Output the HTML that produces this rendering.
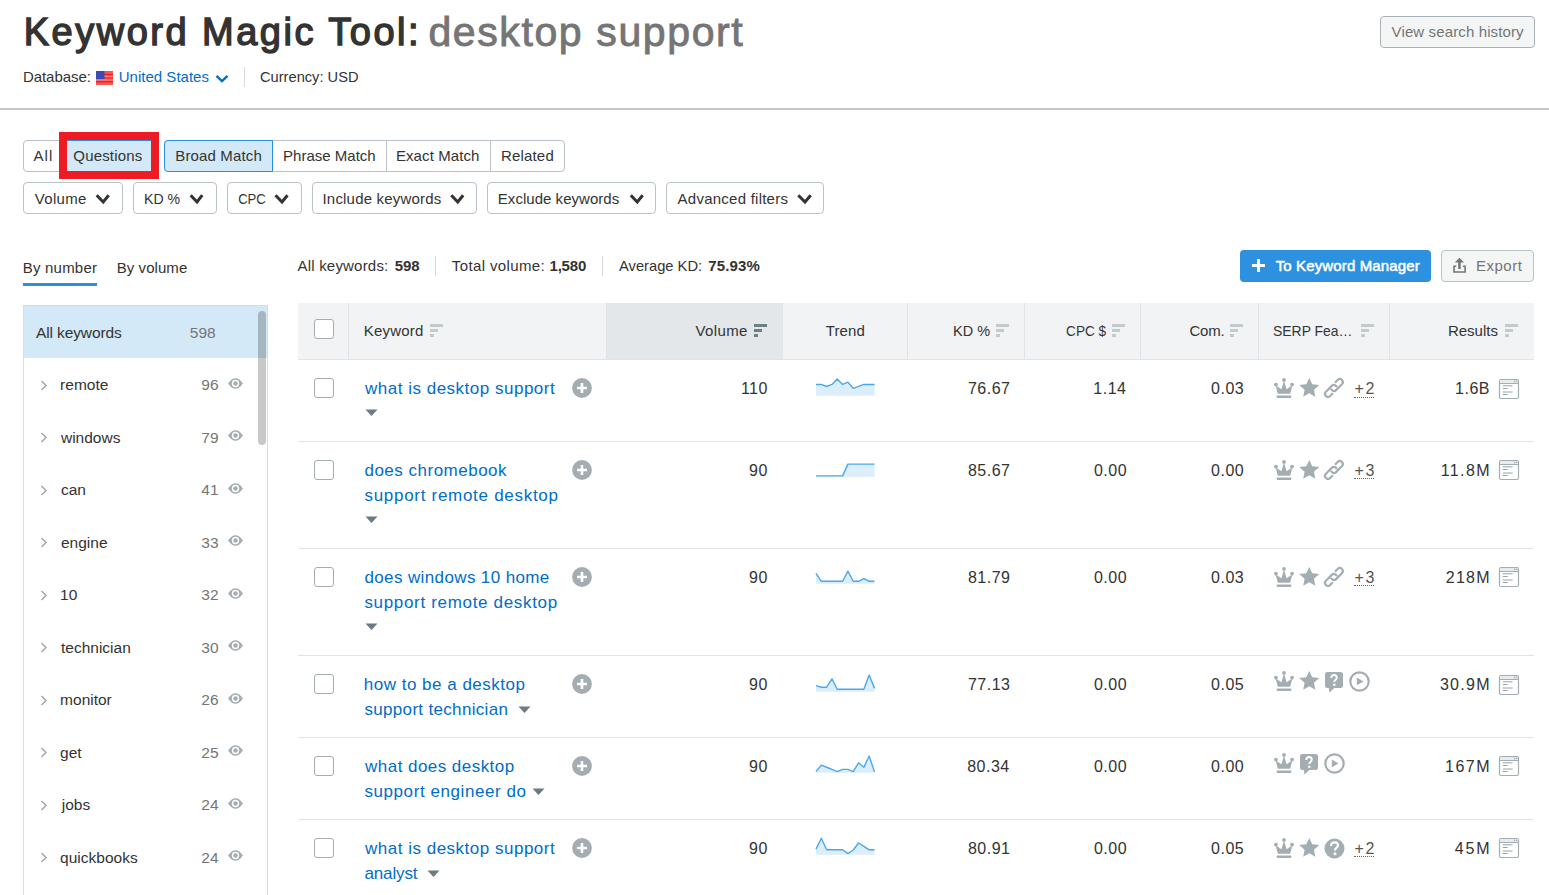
<!DOCTYPE html>
<html><head><meta charset="utf-8"><title>Keyword Magic Tool</title>
<style>
html,body{margin:0;padding:0;background:#fff;}
body{width:1549px;height:895px;overflow:hidden;position:relative;font-family:"Liberation Sans",sans-serif;}
.t{position:absolute;white-space:nowrap;line-height:0;}
svg{overflow:visible}
</style></head><body>
<div class="t" style="left:23.74px;top:32.3px;font-size:38px;color:#333333;font-weight:normal;letter-spacing:2.494px;-webkit-text-stroke:1.4px #333;">Keyword Magic Tool:</div>
<div class="t" style="left:428.40px;top:31.8px;font-size:41px;color:#757575;font-weight:normal;letter-spacing:1.614px;-webkit-text-stroke:0.9px #757575;">desktop support</div>
<div style="position:absolute;left:1380px;top:16px;width:155px;height:32px;box-sizing:border-box;border:1px solid #a8b3b7;border-radius:4px;background:#f4f6f6"></div>
<div class="t" style="left:1391.60px;top:32.0px;font-size:15px;color:#757575;font-weight:normal;letter-spacing:0.123px;">View search history</div>
<div class="t" style="left:22.90px;top:76.8px;font-size:15px;color:#333333;font-weight:normal;letter-spacing:-0.047px;">Database:</div>
<svg style="position:absolute;left:96px;top:71px" width="17" height="14" viewBox="0 0 17 14"><rect width="17" height="14" fill="#f25a5a"/><rect y="2.8" width="17" height="1.4" fill="#ff1a1a"/><rect y="4.7" width="17" height="1.3" fill="#ff7a7a"/><rect y="6.3" width="17" height="1.6" fill="#ff3333"/><rect y="8.3" width="17" height="1.4" fill="#ff7a7a"/><rect y="10" width="17" height="1.4" fill="#ff1a1a"/><rect width="8.5" height="8" fill="#3d4ab2"/></svg>
<div class="t" style="left:118.70px;top:76.8px;font-size:15px;color:#006dca;font-weight:normal;letter-spacing:0.020px;">United States</div>
<svg style="position:absolute;left:215px;top:74px" width="14" height="9" viewBox="0 0 14 9"><path d="M1.5 1.8 L7 7 L12.5 1.8" fill="none" stroke="#006dca" stroke-width="2.4"/></svg>
<div style="position:absolute;left:244px;top:67px;width:1px;height:20px;background:#d5dadd"></div>
<div class="t" style="left:260.22px;top:76.8px;font-size:15px;color:#333333;font-weight:normal;letter-spacing:0.000px;transform:scaleX(0.9761);transform-origin:1px 0;">Currency: USD</div>
<div style="position:absolute;left:0px;top:108px;width:1549px;height:2px;background:#c8c8c8"></div>
<div style="position:absolute;left:23px;top:140px;width:128px;height:32px;box-sizing:border-box;border:1px solid #b9c2c6;border-radius:4px;background:#fff"></div>
<div style="position:absolute;left:67px;top:140px;width:84px;height:31px;background:#d4e9f7;border-top:1px solid #2b8de0;box-sizing:border-box"></div>
<div class="t" style="left:33.50px;top:156.0px;font-size:15px;color:#333333;font-weight:normal;letter-spacing:1.100px;">All</div>
<div class="t" style="left:73.30px;top:156.0px;font-size:15px;color:#333333;font-weight:normal;letter-spacing:0.180px;">Questions</div>
<div style="position:absolute;left:59px;top:132px;width:100px;height:47px;box-sizing:border-box;border:8px solid #ed1c24"></div>
<div style="position:absolute;left:164px;top:140px;width:401px;height:32px;box-sizing:border-box;border:1px solid #b9c2c6;border-radius:4px;background:#fff"></div>
<div style="position:absolute;left:164px;top:140px;width:109px;height:32px;box-sizing:border-box;border:1px solid #2b8de0;border-radius:4px 0 0 4px;background:#d4e9f7"></div>
<div style="position:absolute;left:386px;top:140px;width:1px;height:32px;background:#b9c2c6"></div>
<div style="position:absolute;left:490px;top:140px;width:1px;height:32px;background:#b9c2c6"></div>
<div class="t" style="left:175.30px;top:156.0px;font-size:15px;color:#333333;font-weight:normal;letter-spacing:0.140px;">Broad Match</div>
<div class="t" style="left:283.00px;top:156.0px;font-size:15px;color:#333333;font-weight:normal;letter-spacing:0.015px;">Phrase Match</div>
<div class="t" style="left:395.92px;top:156.0px;font-size:15px;color:#333333;font-weight:normal;letter-spacing:0.100px;">Exact Match</div>
<div class="t" style="left:501.00px;top:156.0px;font-size:15px;color:#333333;font-weight:normal;letter-spacing:0.170px;">Related</div>
<div style="position:absolute;left:23px;top:182px;width:100px;height:32px;box-sizing:border-box;border:1px solid #b9c2c6;border-radius:4px;background:#fff"></div>
<div class="t" style="left:34.80px;top:199.0px;font-size:15px;color:#333333;font-weight:normal;letter-spacing:0.320px;">Volume</div>
<svg style="position:absolute;left:95px;top:192px" width="16" height="12" viewBox="0 0 16 12"><path d="M1.7000000000000057 3.2 L8.200000000000003 10.00000000000001 L13.7 3.2" fill="none" stroke="#333333" stroke-width="3"/></svg>
<div style="position:absolute;left:133px;top:182px;width:84px;height:32px;box-sizing:border-box;border:1px solid #b9c2c6;border-radius:4px;background:#fff"></div>
<div class="t" style="left:143.90px;top:199.0px;font-size:15px;color:#333333;font-weight:normal;letter-spacing:0.000px;transform:scaleX(0.9410);transform-origin:1px 0;">KD %</div>
<svg style="position:absolute;left:189px;top:192px" width="16" height="12" viewBox="0 0 16 12"><path d="M1.7000000000000057 3.2 L8.0 10.00000000000001 L13.299999999999994 3.2" fill="none" stroke="#333333" stroke-width="3"/></svg>
<div style="position:absolute;left:227px;top:182px;width:75px;height:32px;box-sizing:border-box;border:1px solid #b9c2c6;border-radius:4px;background:#fff"></div>
<div class="t" style="left:237.80px;top:199.0px;font-size:15px;color:#333333;font-weight:normal;letter-spacing:0.000px;transform:scaleX(0.8730);transform-origin:1px 0;">CPC</div>
<svg style="position:absolute;left:274px;top:192px" width="16" height="12" viewBox="0 0 16 12"><path d="M1.4999999999999887 3.2 L8.0 10.00000000000001 L13.50000000000001 3.2" fill="none" stroke="#333333" stroke-width="3"/></svg>
<div style="position:absolute;left:312px;top:182px;width:165px;height:32px;box-sizing:border-box;border:1px solid #b9c2c6;border-radius:4px;background:#fff"></div>
<div class="t" style="left:322.50px;top:199.0px;font-size:15px;color:#333333;font-weight:normal;letter-spacing:0.190px;">Include keywords</div>
<svg style="position:absolute;left:450px;top:192px" width="16" height="12" viewBox="0 0 16 12"><path d="M1.3 3.2 L7.75 10.00000000000001 L13.2 3.2" fill="none" stroke="#333333" stroke-width="3"/></svg>
<div style="position:absolute;left:487px;top:182px;width:169px;height:32px;box-sizing:border-box;border:1px solid #b9c2c6;border-radius:4px;background:#fff"></div>
<div class="t" style="left:497.80px;top:199.0px;font-size:15px;color:#333333;font-weight:normal;letter-spacing:0.037px;">Exclude keywords</div>
<svg style="position:absolute;left:629px;top:192px" width="16" height="12" viewBox="0 0 16 12"><path d="M1.8 3.2 L8.25 10.00000000000001 L13.7 3.2" fill="none" stroke="#333333" stroke-width="3"/></svg>
<div style="position:absolute;left:666px;top:182px;width:158px;height:32px;box-sizing:border-box;border:1px solid #b9c2c6;border-radius:4px;background:#fff"></div>
<div class="t" style="left:677.62px;top:199.0px;font-size:15px;color:#333333;font-weight:normal;letter-spacing:0.240px;">Advanced filters</div>
<svg style="position:absolute;left:797px;top:192px" width="17" height="12" viewBox="0 0 17 12"><path d="M1.3 3.2 L8.0 10.00000000000001 L13.7 3.2" fill="none" stroke="#333333" stroke-width="3"/></svg>
<div class="t" style="left:22.80px;top:267.9px;font-size:15px;color:#333333;font-weight:normal;letter-spacing:0.200px;">By number</div>
<div class="t" style="left:116.70px;top:267.9px;font-size:15px;color:#333333;font-weight:normal;letter-spacing:0.070px;">By volume</div>
<div style="position:absolute;left:23px;top:283px;width:74px;height:3px;background:#2b8de0"></div>
<div class="t" style="left:297.50px;top:265.9px;font-size:15px;color:#333333;font-weight:normal;letter-spacing:0.200px;">All keywords:</div>
<div class="t" style="left:394.80px;top:265.9px;font-size:15px;color:#333333;font-weight:bold;letter-spacing:-0.100px;">598</div>
<div style="position:absolute;left:435px;top:256px;width:1px;height:20px;background:#d5dadd"></div>
<div class="t" style="left:451.82px;top:265.9px;font-size:15px;color:#333333;font-weight:normal;letter-spacing:0.370px;">Total volume:</div>
<div class="t" style="left:549.50px;top:265.9px;font-size:15px;color:#333333;font-weight:bold;letter-spacing:-0.195px;">1,580</div>
<div style="position:absolute;left:602px;top:256px;width:1px;height:20px;background:#d5dadd"></div>
<div class="t" style="left:618.62px;top:265.9px;font-size:15px;color:#333333;font-weight:normal;letter-spacing:0.000px;transform:scaleX(0.9800);transform-origin:1px 0;">Average KD:</div>
<div class="t" style="left:708.26px;top:265.9px;font-size:15px;color:#333333;font-weight:bold;letter-spacing:0.120px;">75.93%</div>
<div style="position:absolute;left:1240px;top:250px;width:191px;height:32px;border-radius:4px;background:#2d91e0"></div>
<svg style="position:absolute;left:1252px;top:259px" width="13" height="13" viewBox="0 0 13 13"><path d="M6.5 0 V13 M0 6.5 H13" stroke="#fff" stroke-width="2.8"/></svg>
<div class="t" style="left:1275.70px;top:266.0px;font-size:15px;color:#fff;font-weight:normal;letter-spacing:0.135px;-webkit-text-stroke:0.5px #fff;">To Keyword Manager</div>
<div style="position:absolute;left:1441px;top:250px;width:93px;height:32px;box-sizing:border-box;border:1px solid #b9c2c6;border-radius:4px;background:#f4f6f6"></div>
<svg style="position:absolute;left:1452px;top:256px" width="16" height="18" viewBox="0 0 16 18"><path d="M7.45 1.8 L2.8 6.6 H6.2 V12.9 H8.7 V6.6 H12.1 Z" fill="#757575"/><path d="M4.2 10.3 H2.0 V16.0 H13.1 V10.3 H10.9" fill="none" stroke="#757575" stroke-width="1.6"/></svg>
<div class="t" style="left:1475.92px;top:266.0px;font-size:15px;color:#757575;font-weight:normal;letter-spacing:0.520px;">Export</div>
<div style="position:absolute;left:23px;top:305px;width:245px;height:600px;box-sizing:border-box;border:1px solid #d6dde0;background:#fff"></div>
<div style="position:absolute;left:24px;top:306px;width:243px;height:52px;background:#d4e9f7"></div>
<div style="position:absolute;left:258px;top:311px;width:8px;height:134px;border-radius:4px;background:rgba(0,0,0,0.215)"></div>
<div class="t" style="left:35.98px;top:332.9px;font-size:15.5px;color:#333333;font-weight:normal;letter-spacing:-0.109px;">All keywords</div>
<div class="t" style="left:189.80px;top:332.9px;font-size:15.5px;color:#757575;font-weight:normal;letter-spacing:0.000px;">598</div>
<svg style="position:absolute;left:40px;top:380px" width="8" height="11" viewBox="0 0 8 11"><path d="M1.5 1 L6 5.5 L1.5 10" fill="none" stroke="#9aa5a9" stroke-width="1.4"/></svg>
<div class="t" style="left:60.10px;top:385.0px;font-size:15.5px;color:#333333;font-weight:normal;letter-spacing:0.000px;">remote</div>
<div class="t" style="right:1330.40px;top:385.0px;font-size:15.5px;color:#757575;font-weight:normal;letter-spacing:0px;">96</div>
<svg style="position:absolute;left:228px;top:378px" width="15" height="11" viewBox="0 0 15 11"><path d="M0 5.5 Q7.5 -5 15 5.5 Q7.5 16 0 5.5 Z" fill="#a4aeb2"/><circle cx="7.5" cy="5.5" r="3.7" fill="#fff"/><circle cx="7.5" cy="5.5" r="2.2" fill="#a4aeb2"/></svg>
<svg style="position:absolute;left:40px;top:432px" width="8" height="11" viewBox="0 0 8 11"><path d="M1.5 1 L6 5.5 L1.5 10" fill="none" stroke="#9aa5a9" stroke-width="1.4"/></svg>
<div class="t" style="left:60.98px;top:437.5px;font-size:15.5px;color:#333333;font-weight:normal;letter-spacing:0.000px;">windows</div>
<div class="t" style="right:1330.40px;top:437.5px;font-size:15.5px;color:#757575;font-weight:normal;letter-spacing:0px;">79</div>
<svg style="position:absolute;left:228px;top:430px" width="15" height="11" viewBox="0 0 15 11"><path d="M0 5.5 Q7.5 -5 15 5.5 Q7.5 16 0 5.5 Z" fill="#a4aeb2"/><circle cx="7.5" cy="5.5" r="3.7" fill="#fff"/><circle cx="7.5" cy="5.5" r="2.2" fill="#a4aeb2"/></svg>
<svg style="position:absolute;left:40px;top:485px" width="8" height="11" viewBox="0 0 8 11"><path d="M1.5 1 L6 5.5 L1.5 10" fill="none" stroke="#9aa5a9" stroke-width="1.4"/></svg>
<div class="t" style="left:60.98px;top:490.0px;font-size:15.5px;color:#333333;font-weight:normal;letter-spacing:0.000px;">can</div>
<div class="t" style="right:1330.40px;top:490.0px;font-size:15.5px;color:#757575;font-weight:normal;letter-spacing:0px;">41</div>
<svg style="position:absolute;left:228px;top:483px" width="15" height="11" viewBox="0 0 15 11"><path d="M0 5.5 Q7.5 -5 15 5.5 Q7.5 16 0 5.5 Z" fill="#a4aeb2"/><circle cx="7.5" cy="5.5" r="3.7" fill="#fff"/><circle cx="7.5" cy="5.5" r="2.2" fill="#a4aeb2"/></svg>
<svg style="position:absolute;left:40px;top:537px" width="8" height="11" viewBox="0 0 8 11"><path d="M1.5 1 L6 5.5 L1.5 10" fill="none" stroke="#9aa5a9" stroke-width="1.4"/></svg>
<div class="t" style="left:60.98px;top:542.5px;font-size:15.5px;color:#333333;font-weight:normal;letter-spacing:0.000px;">engine</div>
<div class="t" style="right:1330.40px;top:542.5px;font-size:15.5px;color:#757575;font-weight:normal;letter-spacing:0px;">33</div>
<svg style="position:absolute;left:228px;top:535px" width="15" height="11" viewBox="0 0 15 11"><path d="M0 5.5 Q7.5 -5 15 5.5 Q7.5 16 0 5.5 Z" fill="#a4aeb2"/><circle cx="7.5" cy="5.5" r="3.7" fill="#fff"/><circle cx="7.5" cy="5.5" r="2.2" fill="#a4aeb2"/></svg>
<svg style="position:absolute;left:40px;top:590px" width="8" height="11" viewBox="0 0 8 11"><path d="M1.5 1 L6 5.5 L1.5 10" fill="none" stroke="#9aa5a9" stroke-width="1.4"/></svg>
<div class="t" style="left:60.10px;top:595.0px;font-size:15.5px;color:#333333;font-weight:normal;letter-spacing:0.000px;">10</div>
<div class="t" style="right:1330.40px;top:595.0px;font-size:15.5px;color:#757575;font-weight:normal;letter-spacing:0px;">32</div>
<svg style="position:absolute;left:228px;top:588px" width="15" height="11" viewBox="0 0 15 11"><path d="M0 5.5 Q7.5 -5 15 5.5 Q7.5 16 0 5.5 Z" fill="#a4aeb2"/><circle cx="7.5" cy="5.5" r="3.7" fill="#fff"/><circle cx="7.5" cy="5.5" r="2.2" fill="#a4aeb2"/></svg>
<svg style="position:absolute;left:40px;top:642px" width="8" height="11" viewBox="0 0 8 11"><path d="M1.5 1 L6 5.5 L1.5 10" fill="none" stroke="#9aa5a9" stroke-width="1.4"/></svg>
<div class="t" style="left:60.98px;top:647.5px;font-size:15.5px;color:#333333;font-weight:normal;letter-spacing:0.000px;">technician</div>
<div class="t" style="right:1330.40px;top:647.5px;font-size:15.5px;color:#757575;font-weight:normal;letter-spacing:0px;">30</div>
<svg style="position:absolute;left:228px;top:640px" width="15" height="11" viewBox="0 0 15 11"><path d="M0 5.5 Q7.5 -5 15 5.5 Q7.5 16 0 5.5 Z" fill="#a4aeb2"/><circle cx="7.5" cy="5.5" r="3.7" fill="#fff"/><circle cx="7.5" cy="5.5" r="2.2" fill="#a4aeb2"/></svg>
<svg style="position:absolute;left:40px;top:695px" width="8" height="11" viewBox="0 0 8 11"><path d="M1.5 1 L6 5.5 L1.5 10" fill="none" stroke="#9aa5a9" stroke-width="1.4"/></svg>
<div class="t" style="left:60.10px;top:700.0px;font-size:15.5px;color:#333333;font-weight:normal;letter-spacing:0.000px;">monitor</div>
<div class="t" style="right:1330.40px;top:700.0px;font-size:15.5px;color:#757575;font-weight:normal;letter-spacing:0px;">26</div>
<svg style="position:absolute;left:228px;top:693px" width="15" height="11" viewBox="0 0 15 11"><path d="M0 5.5 Q7.5 -5 15 5.5 Q7.5 16 0 5.5 Z" fill="#a4aeb2"/><circle cx="7.5" cy="5.5" r="3.7" fill="#fff"/><circle cx="7.5" cy="5.5" r="2.2" fill="#a4aeb2"/></svg>
<svg style="position:absolute;left:40px;top:747px" width="8" height="11" viewBox="0 0 8 11"><path d="M1.5 1 L6 5.5 L1.5 10" fill="none" stroke="#9aa5a9" stroke-width="1.4"/></svg>
<div class="t" style="left:60.10px;top:752.5px;font-size:15.5px;color:#333333;font-weight:normal;letter-spacing:0.000px;">get</div>
<div class="t" style="right:1330.40px;top:752.5px;font-size:15.5px;color:#757575;font-weight:normal;letter-spacing:0px;">25</div>
<svg style="position:absolute;left:228px;top:745px" width="15" height="11" viewBox="0 0 15 11"><path d="M0 5.5 Q7.5 -5 15 5.5 Q7.5 16 0 5.5 Z" fill="#a4aeb2"/><circle cx="7.5" cy="5.5" r="3.7" fill="#fff"/><circle cx="7.5" cy="5.5" r="2.2" fill="#a4aeb2"/></svg>
<svg style="position:absolute;left:40px;top:800px" width="8" height="11" viewBox="0 0 8 11"><path d="M1.5 1 L6 5.5 L1.5 10" fill="none" stroke="#9aa5a9" stroke-width="1.4"/></svg>
<div class="t" style="left:61.78px;top:805.0px;font-size:15.5px;color:#333333;font-weight:normal;letter-spacing:0.000px;">jobs</div>
<div class="t" style="right:1330.40px;top:805.0px;font-size:15.5px;color:#757575;font-weight:normal;letter-spacing:0px;">24</div>
<svg style="position:absolute;left:228px;top:798px" width="15" height="11" viewBox="0 0 15 11"><path d="M0 5.5 Q7.5 -5 15 5.5 Q7.5 16 0 5.5 Z" fill="#a4aeb2"/><circle cx="7.5" cy="5.5" r="3.7" fill="#fff"/><circle cx="7.5" cy="5.5" r="2.2" fill="#a4aeb2"/></svg>
<svg style="position:absolute;left:40px;top:852px" width="8" height="11" viewBox="0 0 8 11"><path d="M1.5 1 L6 5.5 L1.5 10" fill="none" stroke="#9aa5a9" stroke-width="1.4"/></svg>
<div class="t" style="left:60.10px;top:857.5px;font-size:15.5px;color:#333333;font-weight:normal;letter-spacing:0.000px;">quickbooks</div>
<div class="t" style="right:1330.40px;top:857.5px;font-size:15.5px;color:#757575;font-weight:normal;letter-spacing:0px;">24</div>
<svg style="position:absolute;left:228px;top:850px" width="15" height="11" viewBox="0 0 15 11"><path d="M0 5.5 Q7.5 -5 15 5.5 Q7.5 16 0 5.5 Z" fill="#a4aeb2"/><circle cx="7.5" cy="5.5" r="3.7" fill="#fff"/><circle cx="7.5" cy="5.5" r="2.2" fill="#a4aeb2"/></svg>
<div style="position:absolute;left:298px;top:303px;width:1236px;height:56px;background:#f1f3f5"></div>
<div style="position:absolute;left:606px;top:303px;width:177px;height:56px;background:#e3e7e9"></div>
<div style="position:absolute;left:298px;top:359px;width:1236px;height:1px;background:#dfe4e6"></div>
<div style="position:absolute;left:348px;top:303px;width:1px;height:56px;background:#e0e4e6"></div>
<div style="position:absolute;left:606px;top:303px;width:1px;height:56px;background:#e0e4e6"></div>
<div style="position:absolute;left:907px;top:303px;width:1px;height:56px;background:#e0e4e6"></div>
<div style="position:absolute;left:1024px;top:303px;width:1px;height:56px;background:#e0e4e6"></div>
<div style="position:absolute;left:1140px;top:303px;width:1px;height:56px;background:#e0e4e6"></div>
<div style="position:absolute;left:1258px;top:303px;width:1px;height:56px;background:#e0e4e6"></div>
<div style="position:absolute;left:1389px;top:303px;width:1px;height:56px;background:#e0e4e6"></div>
<div style="position:absolute;left:314px;top:319px;width:20px;height:20px;box-sizing:border-box;border:1px solid #a4aeb2;border-radius:3px;background:#fff"></div>
<div class="t" style="left:363.70px;top:330.8px;font-size:15px;color:#333333;font-weight:normal;letter-spacing:0.213px;">Keyword</div>
<svg style="position:absolute;left:430px;top:324px" width="13" height="13" viewBox="0 0 13 13"><rect x="0" y="0" width="13" height="3" fill="#c4cbcd"/><rect x="0" y="5" width="8" height="3" fill="#c4cbcd"/><rect x="0" y="10" width="4" height="3" fill="#c4cbcd"/></svg>
<div class="t" style="left:695.44px;top:330.8px;font-size:15px;color:#333333;font-weight:normal;letter-spacing:0.380px;">Volume</div>
<svg style="position:absolute;left:754px;top:324px" width="13" height="13" viewBox="0 0 13 13"><rect x="0" y="0" width="13" height="3" fill="#6c7f86"/><rect x="0" y="5" width="8" height="3" fill="#6c7f86"/><rect x="0" y="10" width="4" height="3" fill="#6c7f86"/></svg>
<div class="t" style="left:825.80px;top:330.8px;font-size:15px;color:#333333;font-weight:normal;letter-spacing:0.100px;">Trend</div>
<div class="t" style="left:952.60px;top:330.8px;font-size:15px;color:#333333;font-weight:normal;letter-spacing:0.000px;transform:scaleX(0.9650);transform-origin:1px 0;">KD %</div>
<svg style="position:absolute;left:996px;top:324px" width="13" height="13" viewBox="0 0 13 13"><rect x="0" y="0" width="13" height="3" fill="#c4cbcd"/><rect x="0" y="5" width="8" height="3" fill="#c4cbcd"/><rect x="0" y="10" width="4" height="3" fill="#c4cbcd"/></svg>
<div class="t" style="left:1065.60px;top:330.8px;font-size:15px;color:#333333;font-weight:normal;letter-spacing:0.000px;transform:scaleX(0.9050);transform-origin:1px 0;">CPC $</div>
<svg style="position:absolute;left:1112px;top:324px" width="13" height="13" viewBox="0 0 13 13"><rect x="0" y="0" width="13" height="3" fill="#c4cbcd"/><rect x="0" y="5" width="8" height="3" fill="#c4cbcd"/><rect x="0" y="10" width="4" height="3" fill="#c4cbcd"/></svg>
<div class="t" style="left:1189.44px;top:330.8px;font-size:15px;color:#333333;font-weight:normal;letter-spacing:-0.203px;">Com.</div>
<svg style="position:absolute;left:1230px;top:324px" width="13" height="13" viewBox="0 0 13 13"><rect x="0" y="0" width="13" height="3" fill="#c4cbcd"/><rect x="0" y="5" width="8" height="3" fill="#c4cbcd"/><rect x="0" y="10" width="4" height="3" fill="#c4cbcd"/></svg>
<div class="t" style="left:1273.30px;top:330.8px;font-size:15px;color:#333333;font-weight:normal;letter-spacing:0.000px;transform:scaleX(0.9270);transform-origin:1px 0;">SERP Fea…</div>
<svg style="position:absolute;left:1361px;top:324px" width="13" height="13" viewBox="0 0 13 13"><rect x="0" y="0" width="13" height="3" fill="#c4cbcd"/><rect x="0" y="5" width="8" height="3" fill="#c4cbcd"/><rect x="0" y="10" width="4" height="3" fill="#c4cbcd"/></svg>
<div class="t" style="left:1447.92px;top:330.8px;font-size:15px;color:#333333;font-weight:normal;letter-spacing:0.000px;">Results</div>
<svg style="position:absolute;left:1505px;top:324px" width="13" height="13" viewBox="0 0 13 13"><rect x="0" y="0" width="13" height="3" fill="#c4cbcd"/><rect x="0" y="5" width="8" height="3" fill="#c4cbcd"/><rect x="0" y="10" width="4" height="3" fill="#c4cbcd"/></svg>
<div style="position:absolute;left:298px;top:441px;width:1236px;height:1px;background:#dfe4e6"></div>
<div style="position:absolute;left:314px;top:378px;width:20px;height:20px;box-sizing:border-box;border:1px solid #a4aeb2;border-radius:3px;background:#fff"></div>
<div class="t" style="left:365.08px;top:388.8px;font-size:17px;color:#006dca;font-weight:normal;letter-spacing:0.500px;">what is desktop support</div>
<svg style="position:absolute;left:365px;top:409px" width="13" height="8" viewBox="0 0 13 8"><path d="M0.5 0.5 H12.5 L6.5 7 Z" fill="#6c7b81"/></svg>
<svg style="position:absolute;left:572px;top:378px" width="20" height="20" viewBox="0 0 20 20"><circle cx="10" cy="10" r="9.9" fill="#a4aeb2"/><path d="M10 5 V15 M5 10 H15" stroke="#fff" stroke-width="2.6"/></svg>
<div class="t" style="right:781.12px;top:388.8px;font-size:16px;color:#333333;font-weight:normal;letter-spacing:0.5px;">110</div>
<div class="t" style="right:538.50px;top:388.8px;font-size:16px;color:#333333;font-weight:normal;letter-spacing:0.5px;">76.67</div>
<div class="t" style="right:422.54px;top:388.8px;font-size:16px;color:#333333;font-weight:normal;letter-spacing:0.5px;">1.14</div>
<div class="t" style="right:304.80px;top:388.8px;font-size:16px;color:#333333;font-weight:normal;letter-spacing:0.5px;">0.03</div>
<div class="t" style="right:59.00px;top:388.8px;font-size:16px;color:#333333;font-weight:normal;letter-spacing:0.5px;">1.6B</div>
<svg style="position:absolute;left:1499px;top:379px" width="20" height="20" viewBox="0 0 20 20"><rect x="0.5" y="0.5" width="19" height="19" rx="1.5" fill="#fff" stroke="#a4aeb2" stroke-width="1.2"/><rect x="1" y="1" width="18" height="3" fill="#e9eced"/><path d="M1 4.5 H19" stroke="#a4aeb2" stroke-width="1"/><rect x="15" y="1.6" width="1.3" height="1.6" fill="#a4aeb2"/><rect x="17.1" y="1.6" width="1.3" height="1.6" fill="#a4aeb2"/><path d="M3.8 6.8 H13.6 M3.8 9.5 H8.6 M3.8 13 H13.6 M3.8 15.5 H8.6" stroke="#98a3a7" stroke-width="1"/></svg>
<svg style="position:absolute;left:1274px;top:378px" width="20" height="21" viewBox="0 0 20 21"><g fill="#a4aeb2"><circle cx="10" cy="1.9" r="1.9"/><circle cx="1.9" cy="6.6" r="1.9"/><circle cx="18.1" cy="6.6" r="1.9"/><path d="M1.6 7.2 L3.8 15.8 H16.2 L18.4 7.2 L12.6 11.3 L10 2.5 L7.4 11.3 Z"/><rect x="2.6" y="17.6" width="14.8" height="2.4" rx="1"/></g></svg>
<svg style="position:absolute;left:1299px;top:378px" width="21" height="20" viewBox="0 0 21 20"><path fill="#a4aeb2" d="M10.3 0 L13.2 6.2 L20.2 7 L15 11.7 L16.3 18.8 L10.3 15.2 L4.2 18.8 L5.6 11.7 L0.2 7 L7.3 6.2 Z"/></svg>
<svg style="position:absolute;left:1322px;top:376px" width="24" height="24" viewBox="0 0 24 24"><g transform="translate(11.9,12) rotate(-45)" fill="none" stroke="#a4aeb2" stroke-width="2.2"><path d="M4.5 -3 L8.3 -3 A3 3 0 0 1 8.3 3 L0 3 A3 3 0 0 1 -2.6 -1.5"/><path d="M-4.5 3 L-8.3 3 A3 3 0 0 1 -8.3 -3 L0 -3 A3 3 0 0 1 2.6 1.5"/></g></svg>
<div class="t" style="left:1354.44px;top:388.8px;font-size:16px;color:#555;font-weight:normal;letter-spacing:1.700px;">+2</div>
<div style="position:absolute;left:1354px;top:397px;width:20px;height:0;border-top:1px dotted #666"></div>
<svg style="position:absolute;left:815px;top:370px" width="61" height="28" viewBox="0 0 61 28"><polygon points="1,25.76 1.00,14.46 6.32,14.46 11.64,16.49 16.95,14.46 22.27,9.04 27.59,14.46 32.91,12.20 38.23,18.30 43.55,16.36 48.86,14.46 54.18,14.46 59.50,14.46 59.50,25.76" fill="#dcedfb"/><polyline points="1.00,14.46 6.32,14.46 11.64,16.49 16.95,14.46 22.27,9.04 27.59,14.46 32.91,12.20 38.23,18.30 43.55,16.36 48.86,14.46 54.18,14.46 59.50,14.46" fill="none" stroke="#4aa8f0" stroke-width="1.4" stroke-linejoin="round"/></svg>
<div style="position:absolute;left:298px;top:548px;width:1236px;height:1px;background:#dfe4e6"></div>
<div style="position:absolute;left:314px;top:460px;width:20px;height:20px;box-sizing:border-box;border:1px solid #a4aeb2;border-radius:3px;background:#fff"></div>
<div class="t" style="left:364.44px;top:470.6px;font-size:17px;color:#006dca;font-weight:normal;letter-spacing:0.500px;">does chromebook</div>
<div class="t" style="left:364.44px;top:495.6px;font-size:17px;color:#006dca;font-weight:normal;letter-spacing:0.710px;">support remote desktop</div>
<svg style="position:absolute;left:365px;top:516px" width="13" height="8" viewBox="0 0 13 8"><path d="M0.5 0.5 H12.5 L6.5 7 Z" fill="#6c7b81"/></svg>
<svg style="position:absolute;left:572px;top:460px" width="20" height="20" viewBox="0 0 20 20"><circle cx="10" cy="10" r="9.9" fill="#a4aeb2"/><path d="M10 5 V15 M5 10 H15" stroke="#fff" stroke-width="2.6"/></svg>
<div class="t" style="right:781.12px;top:470.6px;font-size:16px;color:#333333;font-weight:normal;letter-spacing:0.5px;">90</div>
<div class="t" style="right:538.50px;top:470.6px;font-size:16px;color:#333333;font-weight:normal;letter-spacing:0.5px;">85.67</div>
<div class="t" style="right:421.90px;top:470.6px;font-size:16px;color:#333333;font-weight:normal;letter-spacing:0.5px;">0.00</div>
<div class="t" style="right:304.80px;top:470.6px;font-size:16px;color:#333333;font-weight:normal;letter-spacing:0.5px;">0.00</div>
<div class="t" style="right:58.12px;top:470.6px;font-size:16px;color:#333333;font-weight:normal;letter-spacing:1.375px;">11.8M</div>
<svg style="position:absolute;left:1499px;top:460px" width="20" height="20" viewBox="0 0 20 20"><rect x="0.5" y="0.5" width="19" height="19" rx="1.5" fill="#fff" stroke="#a4aeb2" stroke-width="1.2"/><rect x="1" y="1" width="18" height="3" fill="#e9eced"/><path d="M1 4.5 H19" stroke="#a4aeb2" stroke-width="1"/><rect x="15" y="1.6" width="1.3" height="1.6" fill="#a4aeb2"/><rect x="17.1" y="1.6" width="1.3" height="1.6" fill="#a4aeb2"/><path d="M3.8 6.8 H13.6 M3.8 9.5 H8.6 M3.8 13 H13.6 M3.8 15.5 H8.6" stroke="#98a3a7" stroke-width="1"/></svg>
<svg style="position:absolute;left:1274px;top:460px" width="20" height="21" viewBox="0 0 20 21"><g fill="#a4aeb2"><circle cx="10" cy="1.9" r="1.9"/><circle cx="1.9" cy="6.6" r="1.9"/><circle cx="18.1" cy="6.6" r="1.9"/><path d="M1.6 7.2 L3.8 15.8 H16.2 L18.4 7.2 L12.6 11.3 L10 2.5 L7.4 11.3 Z"/><rect x="2.6" y="17.6" width="14.8" height="2.4" rx="1"/></g></svg>
<svg style="position:absolute;left:1299px;top:460px" width="21" height="20" viewBox="0 0 21 20"><path fill="#a4aeb2" d="M10.3 0 L13.2 6.2 L20.2 7 L15 11.7 L16.3 18.8 L10.3 15.2 L4.2 18.8 L5.6 11.7 L0.2 7 L7.3 6.2 Z"/></svg>
<svg style="position:absolute;left:1322px;top:458px" width="24" height="24" viewBox="0 0 24 24"><g transform="translate(11.9,12) rotate(-45)" fill="none" stroke="#a4aeb2" stroke-width="2.2"><path d="M4.5 -3 L8.3 -3 A3 3 0 0 1 8.3 3 L0 3 A3 3 0 0 1 -2.6 -1.5"/><path d="M-4.5 3 L-8.3 3 A3 3 0 0 1 -8.3 -3 L0 -3 A3 3 0 0 1 2.6 1.5"/></g></svg>
<div class="t" style="left:1354.44px;top:470.6px;font-size:16px;color:#555;font-weight:normal;letter-spacing:1.700px;">+3</div>
<div style="position:absolute;left:1354px;top:478px;width:20px;height:0;border-top:1px dotted #666"></div>
<svg style="position:absolute;left:815px;top:451px" width="61" height="28" viewBox="0 0 61 28"><polygon points="1,25.76 1.00,24.85 6.32,24.85 11.64,24.85 16.95,24.85 22.27,24.85 27.59,24.85 32.91,13.10 38.23,13.10 43.55,13.10 48.86,13.10 54.18,13.10 59.50,13.10 59.50,25.76" fill="#dcedfb"/><polyline points="1.00,24.85 6.32,24.85 11.64,24.85 16.95,24.85 22.27,24.85 27.59,24.85 32.91,13.10 38.23,13.10 43.55,13.10 48.86,13.10 54.18,13.10 59.50,13.10" fill="none" stroke="#4aa8f0" stroke-width="1.4" stroke-linejoin="round"/></svg>
<div style="position:absolute;left:298px;top:655px;width:1236px;height:1px;background:#dfe4e6"></div>
<div style="position:absolute;left:314px;top:567px;width:20px;height:20px;box-sizing:border-box;border:1px solid #a4aeb2;border-radius:3px;background:#fff"></div>
<div class="t" style="left:364.44px;top:577.5px;font-size:17px;color:#006dca;font-weight:normal;letter-spacing:0.379px;">does windows 10 home</div>
<div class="t" style="left:364.44px;top:602.5px;font-size:17px;color:#006dca;font-weight:normal;letter-spacing:0.671px;">support remote desktop</div>
<svg style="position:absolute;left:365px;top:623px" width="13" height="8" viewBox="0 0 13 8"><path d="M0.5 0.5 H12.5 L6.5 7 Z" fill="#6c7b81"/></svg>
<svg style="position:absolute;left:572px;top:567px" width="20" height="20" viewBox="0 0 20 20"><circle cx="10" cy="10" r="9.9" fill="#a4aeb2"/><path d="M10 5 V15 M5 10 H15" stroke="#fff" stroke-width="2.6"/></svg>
<div class="t" style="right:781.12px;top:577.5px;font-size:16px;color:#333333;font-weight:normal;letter-spacing:0.5px;">90</div>
<div class="t" style="right:538.50px;top:577.5px;font-size:16px;color:#333333;font-weight:normal;letter-spacing:0.5px;">81.79</div>
<div class="t" style="right:421.90px;top:577.5px;font-size:16px;color:#333333;font-weight:normal;letter-spacing:0.5px;">0.00</div>
<div class="t" style="right:304.80px;top:577.5px;font-size:16px;color:#333333;font-weight:normal;letter-spacing:0.5px;">0.03</div>
<div class="t" style="right:58.27px;top:577.5px;font-size:16px;color:#333333;font-weight:normal;letter-spacing:1.2333333333332728px;">218M</div>
<svg style="position:absolute;left:1499px;top:567px" width="20" height="20" viewBox="0 0 20 20"><rect x="0.5" y="0.5" width="19" height="19" rx="1.5" fill="#fff" stroke="#a4aeb2" stroke-width="1.2"/><rect x="1" y="1" width="18" height="3" fill="#e9eced"/><path d="M1 4.5 H19" stroke="#a4aeb2" stroke-width="1"/><rect x="15" y="1.6" width="1.3" height="1.6" fill="#a4aeb2"/><rect x="17.1" y="1.6" width="1.3" height="1.6" fill="#a4aeb2"/><path d="M3.8 6.8 H13.6 M3.8 9.5 H8.6 M3.8 13 H13.6 M3.8 15.5 H8.6" stroke="#98a3a7" stroke-width="1"/></svg>
<svg style="position:absolute;left:1274px;top:567px" width="20" height="21" viewBox="0 0 20 21"><g fill="#a4aeb2"><circle cx="10" cy="1.9" r="1.9"/><circle cx="1.9" cy="6.6" r="1.9"/><circle cx="18.1" cy="6.6" r="1.9"/><path d="M1.6 7.2 L3.8 15.8 H16.2 L18.4 7.2 L12.6 11.3 L10 2.5 L7.4 11.3 Z"/><rect x="2.6" y="17.6" width="14.8" height="2.4" rx="1"/></g></svg>
<svg style="position:absolute;left:1299px;top:567px" width="21" height="20" viewBox="0 0 21 20"><path fill="#a4aeb2" d="M10.3 0 L13.2 6.2 L20.2 7 L15 11.7 L16.3 18.8 L10.3 15.2 L4.2 18.8 L5.6 11.7 L0.2 7 L7.3 6.2 Z"/></svg>
<svg style="position:absolute;left:1322px;top:565px" width="24" height="24" viewBox="0 0 24 24"><g transform="translate(11.9,12) rotate(-45)" fill="none" stroke="#a4aeb2" stroke-width="2.2"><path d="M4.5 -3 L8.3 -3 A3 3 0 0 1 8.3 3 L0 3 A3 3 0 0 1 -2.6 -1.5"/><path d="M-4.5 3 L-8.3 3 A3 3 0 0 1 -8.3 -3 L0 -3 A3 3 0 0 1 2.6 1.5"/></g></svg>
<div class="t" style="left:1354.44px;top:577.5px;font-size:16px;color:#555;font-weight:normal;letter-spacing:1.700px;">+3</div>
<div style="position:absolute;left:1354px;top:585px;width:20px;height:0;border-top:1px dotted #666"></div>
<svg style="position:absolute;left:815px;top:558px" width="61" height="28" viewBox="0 0 61 28"><polygon points="1,25.76 1.00,15.36 6.32,23.27 11.64,23.27 16.95,23.27 22.27,23.27 27.59,23.27 32.91,13.10 38.23,23.27 43.55,23.27 48.86,20.56 54.18,23.27 59.50,23.27 59.50,25.76" fill="#dcedfb"/><polyline points="1.00,15.36 6.32,23.27 11.64,23.27 16.95,23.27 22.27,23.27 27.59,23.27 32.91,13.10 38.23,23.27 43.55,23.27 48.86,20.56 54.18,23.27 59.50,23.27" fill="none" stroke="#4aa8f0" stroke-width="1.4" stroke-linejoin="round"/></svg>
<div style="position:absolute;left:298px;top:737px;width:1236px;height:1px;background:#dfe4e6"></div>
<div style="position:absolute;left:314px;top:674px;width:20px;height:20px;box-sizing:border-box;border:1px solid #a4aeb2;border-radius:3px;background:#fff"></div>
<div class="t" style="left:363.80px;top:684.8px;font-size:17px;color:#006dca;font-weight:normal;letter-spacing:0.500px;">how to be a desktop</div>
<div class="t" style="left:364.44px;top:709.8px;font-size:17px;color:#006dca;font-weight:normal;letter-spacing:0.324px;">support technician</div>
<svg style="position:absolute;left:518px;top:706px" width="13" height="8" viewBox="0 0 13 8"><path d="M0.5 0.5 H12.5 L6.5 7 Z" fill="#6c7b81"/></svg>
<svg style="position:absolute;left:572px;top:674px" width="20" height="20" viewBox="0 0 20 20"><circle cx="10" cy="10" r="9.9" fill="#a4aeb2"/><path d="M10 5 V15 M5 10 H15" stroke="#fff" stroke-width="2.6"/></svg>
<div class="t" style="right:781.12px;top:684.8px;font-size:16px;color:#333333;font-weight:normal;letter-spacing:0.5px;">90</div>
<div class="t" style="right:538.50px;top:684.8px;font-size:16px;color:#333333;font-weight:normal;letter-spacing:0.5px;">77.13</div>
<div class="t" style="right:421.90px;top:684.8px;font-size:16px;color:#333333;font-weight:normal;letter-spacing:0.5px;">0.00</div>
<div class="t" style="right:304.80px;top:684.8px;font-size:16px;color:#333333;font-weight:normal;letter-spacing:0.5px;">0.05</div>
<div class="t" style="right:58.23px;top:684.8px;font-size:16px;color:#333333;font-weight:normal;letter-spacing:1.2749999999999773px;">30.9M</div>
<svg style="position:absolute;left:1499px;top:675px" width="20" height="20" viewBox="0 0 20 20"><rect x="0.5" y="0.5" width="19" height="19" rx="1.5" fill="#fff" stroke="#a4aeb2" stroke-width="1.2"/><rect x="1" y="1" width="18" height="3" fill="#e9eced"/><path d="M1 4.5 H19" stroke="#a4aeb2" stroke-width="1"/><rect x="15" y="1.6" width="1.3" height="1.6" fill="#a4aeb2"/><rect x="17.1" y="1.6" width="1.3" height="1.6" fill="#a4aeb2"/><path d="M3.8 6.8 H13.6 M3.8 9.5 H8.6 M3.8 13 H13.6 M3.8 15.5 H8.6" stroke="#98a3a7" stroke-width="1"/></svg>
<svg style="position:absolute;left:1274px;top:671px" width="20" height="21" viewBox="0 0 20 21"><g fill="#a4aeb2"><circle cx="10" cy="1.9" r="1.9"/><circle cx="1.9" cy="6.6" r="1.9"/><circle cx="18.1" cy="6.6" r="1.9"/><path d="M1.6 7.2 L3.8 15.8 H16.2 L18.4 7.2 L12.6 11.3 L10 2.5 L7.4 11.3 Z"/><rect x="2.6" y="17.6" width="14.8" height="2.4" rx="1"/></g></svg>
<svg style="position:absolute;left:1299px;top:671px" width="21" height="20" viewBox="0 0 21 20"><path fill="#a4aeb2" d="M10.3 0 L13.2 6.2 L20.2 7 L15 11.7 L16.3 18.8 L10.3 15.2 L4.2 18.8 L5.6 11.7 L0.2 7 L7.3 6.2 Z"/></svg>
<svg style="position:absolute;left:1325px;top:671.8px" width="19" height="21" viewBox="0 0 19 21"><path fill="#a4aeb2" d="M2.5 0 H15.5 A2.5 2.5 0 0 1 18 2.5 V13.5 A2.5 2.5 0 0 1 15.5 16 H9.3 L4.5 20.5 L3.8 16 H2.5 A2.5 2.5 0 0 1 0 13.5 V2.5 A2.5 2.5 0 0 1 2.5 0 Z"/><path d="M6.2 6 Q6.5 3 9 3 Q11.8 3 11.8 5.6 Q11.8 7 10.2 8.2 Q9.3 9 9.3 10" fill="none" stroke="#fff" stroke-width="1.9"/><circle cx="9.3" cy="12.8" r="1.3" fill="#fff"/></svg>
<svg style="position:absolute;left:1349px;top:671px" width="21" height="21" viewBox="0 0 21 21"><circle cx="10.5" cy="10.5" r="9.2" fill="none" stroke="#a4aeb2" stroke-width="2.2"/><path d="M7.8 6.5 V14.3 L14.5 10.4 Z" fill="#a4aeb2"/></svg>
<svg style="position:absolute;left:815px;top:666px" width="61" height="28" viewBox="0 0 61 28"><polygon points="1,25.76 1.00,19.66 6.32,21.24 11.64,21.24 16.95,12.88 22.27,23.27 27.59,23.27 32.91,23.27 38.23,23.27 43.55,23.27 48.86,23.27 54.18,9.04 59.50,22.37 59.50,25.76" fill="#dcedfb"/><polyline points="1.00,19.66 6.32,21.24 11.64,21.24 16.95,12.88 22.27,23.27 27.59,23.27 32.91,23.27 38.23,23.27 43.55,23.27 48.86,23.27 54.18,9.04 59.50,22.37" fill="none" stroke="#4aa8f0" stroke-width="1.4" stroke-linejoin="round"/></svg>
<div style="position:absolute;left:298px;top:819px;width:1236px;height:1px;background:#dfe4e6"></div>
<div style="position:absolute;left:314px;top:756px;width:20px;height:20px;box-sizing:border-box;border:1px solid #a4aeb2;border-radius:3px;background:#fff"></div>
<div class="t" style="left:365.08px;top:766.5px;font-size:17px;color:#006dca;font-weight:normal;letter-spacing:0.456px;">what does desktop</div>
<div class="t" style="left:364.44px;top:791.5px;font-size:17px;color:#006dca;font-weight:normal;letter-spacing:0.578px;">support engineer do</div>
<svg style="position:absolute;left:532px;top:788px" width="13" height="8" viewBox="0 0 13 8"><path d="M0.5 0.5 H12.5 L6.5 7 Z" fill="#6c7b81"/></svg>
<svg style="position:absolute;left:572px;top:756px" width="20" height="20" viewBox="0 0 20 20"><circle cx="10" cy="10" r="9.9" fill="#a4aeb2"/><path d="M10 5 V15 M5 10 H15" stroke="#fff" stroke-width="2.6"/></svg>
<div class="t" style="right:781.12px;top:766.5px;font-size:16px;color:#333333;font-weight:normal;letter-spacing:0.5px;">90</div>
<div class="t" style="right:539.30px;top:766.5px;font-size:16px;color:#333333;font-weight:normal;letter-spacing:0.5px;">80.34</div>
<div class="t" style="right:421.90px;top:766.5px;font-size:16px;color:#333333;font-weight:normal;letter-spacing:0.5px;">0.00</div>
<div class="t" style="right:304.80px;top:766.5px;font-size:16px;color:#333333;font-weight:normal;letter-spacing:0.5px;">0.00</div>
<div class="t" style="right:58.03px;top:766.5px;font-size:16px;color:#333333;font-weight:normal;letter-spacing:1.466666666666697px;">167M</div>
<svg style="position:absolute;left:1499px;top:756px" width="20" height="20" viewBox="0 0 20 20"><rect x="0.5" y="0.5" width="19" height="19" rx="1.5" fill="#fff" stroke="#a4aeb2" stroke-width="1.2"/><rect x="1" y="1" width="18" height="3" fill="#e9eced"/><path d="M1 4.5 H19" stroke="#a4aeb2" stroke-width="1"/><rect x="15" y="1.6" width="1.3" height="1.6" fill="#a4aeb2"/><rect x="17.1" y="1.6" width="1.3" height="1.6" fill="#a4aeb2"/><path d="M3.8 6.8 H13.6 M3.8 9.5 H8.6 M3.8 13 H13.6 M3.8 15.5 H8.6" stroke="#98a3a7" stroke-width="1"/></svg>
<svg style="position:absolute;left:1274px;top:753px" width="20" height="21" viewBox="0 0 20 21"><g fill="#a4aeb2"><circle cx="10" cy="1.9" r="1.9"/><circle cx="1.9" cy="6.6" r="1.9"/><circle cx="18.1" cy="6.6" r="1.9"/><path d="M1.6 7.2 L3.8 15.8 H16.2 L18.4 7.2 L12.6 11.3 L10 2.5 L7.4 11.3 Z"/><rect x="2.6" y="17.6" width="14.8" height="2.4" rx="1"/></g></svg>
<svg style="position:absolute;left:1300px;top:753.8px" width="19" height="21" viewBox="0 0 19 21"><path fill="#a4aeb2" d="M2.5 0 H15.5 A2.5 2.5 0 0 1 18 2.5 V13.5 A2.5 2.5 0 0 1 15.5 16 H9.3 L4.5 20.5 L3.8 16 H2.5 A2.5 2.5 0 0 1 0 13.5 V2.5 A2.5 2.5 0 0 1 2.5 0 Z"/><path d="M6.2 6 Q6.5 3 9 3 Q11.8 3 11.8 5.6 Q11.8 7 10.2 8.2 Q9.3 9 9.3 10" fill="none" stroke="#fff" stroke-width="1.9"/><circle cx="9.3" cy="12.8" r="1.3" fill="#fff"/></svg>
<svg style="position:absolute;left:1324px;top:753px" width="21" height="21" viewBox="0 0 21 21"><circle cx="10.5" cy="10.5" r="9.2" fill="none" stroke="#a4aeb2" stroke-width="2.2"/><path d="M7.8 6.5 V14.3 L14.5 10.4 Z" fill="#a4aeb2"/></svg>
<svg style="position:absolute;left:815px;top:747px" width="61" height="28" viewBox="0 0 61 28"><polygon points="1,25.76 1.00,24.63 6.32,18.08 11.64,20.24 16.95,22.46 22.27,24.63 27.59,22.37 32.91,22.37 38.23,24.63 43.55,15.82 48.86,20.33 54.18,9.04 59.50,24.85 59.50,25.76" fill="#dcedfb"/><polyline points="1.00,24.63 6.32,18.08 11.64,20.24 16.95,22.46 22.27,24.63 27.59,22.37 32.91,22.37 38.23,24.63 43.55,15.82 48.86,20.33 54.18,9.04 59.50,24.85" fill="none" stroke="#4aa8f0" stroke-width="1.4" stroke-linejoin="round"/></svg>
<div style="position:absolute;left:298px;top:925px;width:1236px;height:1px;background:#dfe4e6"></div>
<div style="position:absolute;left:314px;top:838px;width:20px;height:20px;box-sizing:border-box;border:1px solid #a4aeb2;border-radius:3px;background:#fff"></div>
<div class="t" style="left:365.08px;top:848.6px;font-size:17px;color:#006dca;font-weight:normal;letter-spacing:0.500px;">what is desktop support</div>
<div class="t" style="left:364.44px;top:873.6px;font-size:17px;color:#006dca;font-weight:normal;letter-spacing:-0.133px;">analyst</div>
<svg style="position:absolute;left:427px;top:870px" width="13" height="8" viewBox="0 0 13 8"><path d="M0.5 0.5 H12.5 L6.5 7 Z" fill="#6c7b81"/></svg>
<svg style="position:absolute;left:572px;top:838px" width="20" height="20" viewBox="0 0 20 20"><circle cx="10" cy="10" r="9.9" fill="#a4aeb2"/><path d="M10 5 V15 M5 10 H15" stroke="#fff" stroke-width="2.6"/></svg>
<div class="t" style="right:781.12px;top:848.6px;font-size:16px;color:#333333;font-weight:normal;letter-spacing:0.5px;">90</div>
<div class="t" style="right:538.50px;top:848.6px;font-size:16px;color:#333333;font-weight:normal;letter-spacing:0.5px;">80.91</div>
<div class="t" style="right:421.90px;top:848.6px;font-size:16px;color:#333333;font-weight:normal;letter-spacing:0.5px;">0.00</div>
<div class="t" style="right:304.80px;top:848.6px;font-size:16px;color:#333333;font-weight:normal;letter-spacing:0.5px;">0.05</div>
<div class="t" style="right:57.70px;top:848.6px;font-size:16px;color:#333333;font-weight:normal;letter-spacing:1.7999999999999545px;">45M</div>
<svg style="position:absolute;left:1499px;top:838px" width="20" height="20" viewBox="0 0 20 20"><rect x="0.5" y="0.5" width="19" height="19" rx="1.5" fill="#fff" stroke="#a4aeb2" stroke-width="1.2"/><rect x="1" y="1" width="18" height="3" fill="#e9eced"/><path d="M1 4.5 H19" stroke="#a4aeb2" stroke-width="1"/><rect x="15" y="1.6" width="1.3" height="1.6" fill="#a4aeb2"/><rect x="17.1" y="1.6" width="1.3" height="1.6" fill="#a4aeb2"/><path d="M3.8 6.8 H13.6 M3.8 9.5 H8.6 M3.8 13 H13.6 M3.8 15.5 H8.6" stroke="#98a3a7" stroke-width="1"/></svg>
<svg style="position:absolute;left:1274px;top:838px" width="20" height="21" viewBox="0 0 20 21"><g fill="#a4aeb2"><circle cx="10" cy="1.9" r="1.9"/><circle cx="1.9" cy="6.6" r="1.9"/><circle cx="18.1" cy="6.6" r="1.9"/><path d="M1.6 7.2 L3.8 15.8 H16.2 L18.4 7.2 L12.6 11.3 L10 2.5 L7.4 11.3 Z"/><rect x="2.6" y="17.6" width="14.8" height="2.4" rx="1"/></g></svg>
<svg style="position:absolute;left:1299px;top:838px" width="21" height="20" viewBox="0 0 21 20"><path fill="#a4aeb2" d="M10.3 0 L13.2 6.2 L20.2 7 L15 11.7 L16.3 18.8 L10.3 15.2 L4.2 18.8 L5.6 11.7 L0.2 7 L7.3 6.2 Z"/></svg>
<svg style="position:absolute;left:1324px;top:838px" width="21" height="21" viewBox="0 0 21 21"><circle cx="10.5" cy="10.5" r="10" fill="#a4aeb2"/><path d="M7 8 Q7 4.3 10.5 4.3 Q14 4.3 14 7.3 Q14 9 12.2 10.2 Q11 11 11 12.5" fill="none" stroke="#fff" stroke-width="2.2"/><circle cx="11" cy="15.8" r="1.5" fill="#fff"/></svg>
<div class="t" style="left:1354.44px;top:848.6px;font-size:16px;color:#555;font-weight:normal;letter-spacing:1.700px;">+2</div>
<div style="position:absolute;left:1354px;top:856px;width:20px;height:0;border-top:1px dotted #666"></div>
<svg style="position:absolute;left:815px;top:829px" width="61" height="28" viewBox="0 0 61 28"><polygon points="1,25.76 1.00,20.11 6.32,9.26 11.64,20.79 16.95,20.79 22.27,20.79 27.59,20.79 32.91,24.63 38.23,21.01 43.55,14.01 48.86,17.40 54.18,20.79 59.50,20.79 59.50,25.76" fill="#dcedfb"/><polyline points="1.00,20.11 6.32,9.26 11.64,20.79 16.95,20.79 22.27,20.79 27.59,20.79 32.91,24.63 38.23,21.01 43.55,14.01 48.86,17.40 54.18,20.79 59.50,20.79" fill="none" stroke="#4aa8f0" stroke-width="1.4" stroke-linejoin="round"/></svg>
</body></html>
